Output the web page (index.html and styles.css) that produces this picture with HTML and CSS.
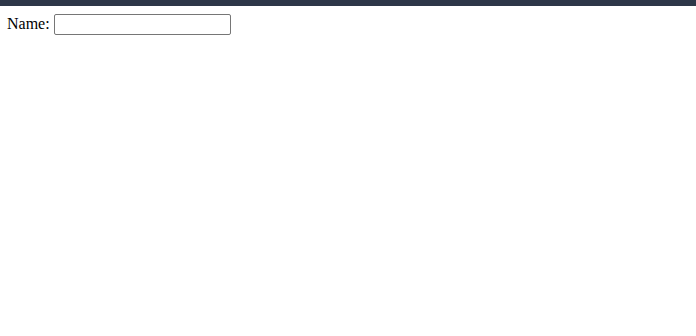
FILE: index.html
```html
<!DOCTYPE html>
<html>
<head>
<meta charset="utf-8">
<link rel="stylesheet" href="styles.css">
</head>
<body>
<div class="topbar"></div>
<div class="content">
<label class="field">Name: <input class="name-input" type="text"></label>
</div>
</body>
</html>
```

FILE: styles.css
```css
html, body {
  margin: 0;
  padding: 0;
  background: #ffffff;
}
body {
  font-family: "Liberation Serif", "Times New Roman", serif;
  font-size: 16px;
  color: #000000;
}
.topbar {
  height: 6px;
  background: #2d3748;
}
.content {
  padding: 8px 7px;
}
.name-input {
  font-family: "Liberation Sans", Arial, sans-serif;
  font-size: 13.333px;
  width: 177px;
  height: 21px;
  box-sizing: border-box;
  border: 1px solid #767676;
  border-radius: 2px;
  padding: 1px 2px;
  margin: 0;
}
```
